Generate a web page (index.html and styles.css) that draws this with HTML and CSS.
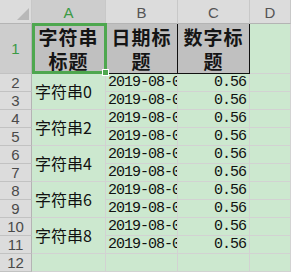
FILE: index.html
```html
<!DOCTYPE html>
<html lang="zh-CN">
<head>
    <meta charset="UTF-8">
    <title>Sheet1</title>
    <link rel="stylesheet" href="styles.css">
</head>
<body>
    <div class="sheet">
        <div class="corner"><span class="tri"></span></div>
        <div class="col-head active">A</div>
        <div class="col-head">B</div>
        <div class="col-head">C</div>
        <div class="col-head">D</div>

        <div class="row-head active">1</div>
        <div class="cell title">字符串<br>标题</div>
        <div class="cell title">日期标<br>题</div>
        <div class="cell title">数字标<br>题</div>
        <div class="cell"></div>

        <div class="row-head">2</div>
        <div class="cell name span2">字符串0</div>
        <div class="cell date">2019-08-01</div>
        <div class="cell num">0.56</div>
        <div class="cell"></div>
        <div class="row-head">3</div>
        <div class="cell date">2019-08-01</div>
        <div class="cell num">0.56</div>
        <div class="cell"></div>

        <div class="row-head">4</div>
        <div class="cell name span2">字符串2</div>
        <div class="cell date">2019-08-01</div>
        <div class="cell num">0.56</div>
        <div class="cell"></div>
        <div class="row-head">5</div>
        <div class="cell date">2019-08-01</div>
        <div class="cell num">0.56</div>
        <div class="cell"></div>

        <div class="row-head">6</div>
        <div class="cell name span2">字符串4</div>
        <div class="cell date">2019-08-01</div>
        <div class="cell num">0.56</div>
        <div class="cell"></div>
        <div class="row-head">7</div>
        <div class="cell date">2019-08-01</div>
        <div class="cell num">0.56</div>
        <div class="cell"></div>

        <div class="row-head">8</div>
        <div class="cell name span2">字符串6</div>
        <div class="cell date">2019-08-01</div>
        <div class="cell num">0.56</div>
        <div class="cell"></div>
        <div class="row-head">9</div>
        <div class="cell date">2019-08-01</div>
        <div class="cell num">0.56</div>
        <div class="cell"></div>

        <div class="row-head">10</div>
        <div class="cell name span2">字符串8</div>
        <div class="cell date">2019-08-01</div>
        <div class="cell num">0.56</div>
        <div class="cell"></div>
        <div class="row-head">11</div>
        <div class="cell date">2019-08-01</div>
        <div class="cell num">0.56</div>
        <div class="cell"></div>

        <div class="row-head">12</div>
        <div class="cell"></div>
        <div class="cell"></div>
        <div class="cell"></div>
        <div class="cell"></div>

        <!-- selected cell A1 -->
        <div class="selection"><span class="handle"></span></div>
    </div>
</body>
</html>
```

FILE: styles.css
```css
body {
    margin: 0;
    background-color: #cce8cf;
    overflow: hidden;
}

.sheet {
    position: relative;
    display: grid;
    grid-template-columns: 32px 74px 72px 72px 1fr;
    grid-template-rows: 24px 50px repeat(11, 18px);
    width: 291px;
    font-family: "Liberation Mono", monospace;
}

.corner {
    position: relative;
    background-color: #dcdcdc;
    border-right: 1px solid #c8c8c8;
    border-bottom: 1px solid #b4b4b4;
    box-sizing: border-box;
}

.tri {
    position: absolute;
    right: 2px;
    bottom: 3px;
    width: 0;
    height: 0;
    border-left: 12px solid transparent;
    border-bottom: 12px solid #b8b8b8;
}

.col-head {
    background-color: #dcdcdc;
    border-right: 1px solid #c8c8c8;
    border-bottom: 1px solid #b4b4b4;
    box-sizing: border-box;
    font-family: "Liberation Sans", sans-serif;
    font-size: 15px;
    color: #555;
    display: flex;
    align-items: center;
    justify-content: center;
    padding-top: 1px;
}

.col-head.active {
    background-color: #cdcdcd;
    color: #3b9a45;
}

.row-head {
    background-color: #dcdcdc;
    border-right: 1px solid #b4b4b4;
    border-bottom: 1px solid #c2c2c2;
    box-sizing: border-box;
    font-family: "Liberation Sans", sans-serif;
    font-size: 15px;
    color: #4a4a4a;
    display: flex;
    align-items: center;
    justify-content: center;
}

.row-head.active {
    background-color: #cdcdcd;
    color: #3b9a45;
}

.cell {
    border-right: 1px solid #d2d2d2;
    border-bottom: 1px solid #d2d2d2;
    box-sizing: border-box;
    overflow: hidden;
    white-space: nowrap;
    font-size: 15px;
    letter-spacing: -1px;
    color: #111;
    line-height: 17px;
}

.title {
    background-color: #c0c0c0;
    border-right: 1px solid #111;
    border-bottom: 1px solid #111;
    font-family: "Noto Sans CJK SC", sans-serif;
    font-weight: 700;
    font-size: 19px;
    line-height: 24px;
    letter-spacing: 1px;
    color: #151515;
    text-align: center;
    padding-top: 1px;
}

.name {
    grid-row: span 2;
    display: flex;
    align-items: center;
    padding-left: 3px;
    font-family: "Noto Sans CJK SC", sans-serif;
    font-size: 16px;
    letter-spacing: 0;
}

.date {
    padding-left: 2px;
}

.num {
    text-align: right;
    padding-right: 3px;
}

.selection {
    position: absolute;
    left: 32px;
    top: 23px;
    width: 75px;
    height: 51px;
    border: 3px solid #4ea74f;
    box-sizing: border-box;
}

.handle {
    position: absolute;
    right: -5px;
    bottom: -5px;
    width: 5px;
    height: 5px;
    background-color: #4ea74f;
    border: 1px solid #fff;
}
```
